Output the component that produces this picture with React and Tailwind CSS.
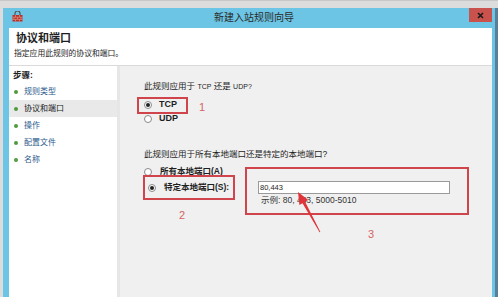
import React from 'react';

function Radio({ checked }) {
  return (
    <span className="w-[8px] h-[8px] rounded-full border border-[#8a8a8a] bg-white flex items-center justify-center shrink-0">
      {checked && <span className="w-[4px] h-[4px] rounded-full bg-[#222]"></span>}
    </span>
  );
}

function FirewallIcon() {
  return (
    <svg width="11" height="11" viewBox="0 0 11 11">
      <path d="M3 4 V2.5 A2.5 2.5 0 0 1 8 2.5 V4" fill="none" stroke="#555" strokeWidth="1.2" />
      <rect x="0.5" y="4" width="10" height="6.5" fill="#b8302a" />
      <path d="M0.5 6.2 H10.5 M0.5 8.4 H10.5 M3.5 4 V6.2 M7.5 4 V6.2 M5.5 6.2 V8.4 M2 6.2 V8.4 M9 6.2 V8.4 M3.5 8.4 V10.5 M7.5 8.4 V10.5" stroke="#e8a090" strokeWidth="0.6" />
    </svg>
  );
}

const steps = [
  { label: '规则类型', active: false },
  { label: '协议和端口', active: true },
  { label: '操作', active: false },
  { label: '配置文件', active: false },
  { label: '名称', active: false },
];

export default function App() {
  return (
    <div className="relative w-[498px] h-[297px] overflow-hidden bg-[#dcdcdc] flex flex-col font-['Liberation_Sans','Noto_Sans_CJK_SC',sans-serif] text-[#1e1e1e]">
      <div className="h-[8px] shrink-0 border-t border-[#c8c8c8]"></div>
      <div className="flex flex-1 min-h-0">
        <div className="w-[3px] shrink-0"></div>
        {/* window frame */}
        <div className="flex-1 bg-[#6cc5e4] pl-[6px] pr-[3px] flex flex-col">
          {/* title bar */}
          <div className="h-[20px] shrink-0 flex items-start">
            <div className="w-[20px] pt-[3px] pl-[3px] shrink-0">
              <FirewallIcon />
            </div>
            <div className="flex-1 h-[20px] flex items-center justify-center">
              <span className="text-[10px] leading-none text-[#2a2a2a] ml-[10px]">新建入站规则向导</span>
            </div>
            <div className="w-[23px] h-[14px] shrink-0 bg-[#c9524c] flex items-center justify-center">
              <svg width="7" height="7" viewBox="0 0 7 7">
                <path d="M1 1 L6 6 M6 1 L1 6" stroke="#1a1a1a" strokeWidth="1.6" />
              </svg>
            </div>
          </div>
          {/* client */}
          <div className="flex-1 bg-white flex flex-col min-h-0">
            <div className="h-[38px] shrink-0 border-b border-[#dadada] pl-[7px] pt-[3px]">
              <div className="text-[11px] leading-[14px] font-bold">协议和端口</div>
              <div className="text-[7.8px] leading-[10px] mt-[4px] -ml-[2px]">指定应用此规则的协议和端口。</div>
            </div>
            <div className="flex flex-1 min-h-0">
              {/* steps pane */}
              <div className="w-[111px] shrink-0 bg-white border-r-[3px] border-[#e6e6e6] pt-[4px]">
                <div className="pl-[4px] text-[8.5px] leading-[11px] font-bold">步骤:</div>
                <div className="mt-[2px]">
                  {steps.map((s) => (
                    <div
                      key={s.label}
                      className={`h-[17px] flex items-center pl-[5px] gap-[6px] ${s.active ? 'bg-[#e9e9e9]' : ''}`}
                    >
                      <span className="w-[4px] h-[4px] rounded-full bg-[#4f9a3c]"></span>
                      <span className={`text-[8px] leading-none ${s.active ? 'text-[#1a1a1a]' : 'text-[#2c5a8c]'}`}>{s.label}</span>
                    </div>
                  ))}
                </div>
              </div>
              {/* content pane */}
              <div className="flex-1 bg-[#f0f0f0] pl-[24px] pt-[15px] text-[8.5px]">
                <div className="h-[11px] leading-[11px]">此规则应用于 <span className="text-[7px]">TCP</span> 还是 <span className="text-[7px]">UDP?</span></div>
                <div className="mt-[7px] h-[11px] flex items-center gap-[7px]">
                  <Radio checked />
                  <span className="font-bold text-[9px] leading-none">TCP</span>
                </div>
                <div className="mt-[3px] h-[11px] flex items-center gap-[7px]">
                  <Radio />
                  <span className="font-bold text-[9px] leading-none">UDP</span>
                </div>
                <div className="mt-[25px] h-[11px] leading-[11px]">此规则应用于所有本地端口还是特定的本地端口?</div>
                <div className="mt-[6px] h-[11px] flex items-center gap-[8px]">
                  <Radio />
                  <span className="font-bold leading-none">所有本地端口(A)</span>
                </div>
                <div className="mt-[4px] flex items-start">
                  <div className="w-[114px] h-[13px] flex items-center gap-[8px] pl-[4px]">
                    <Radio checked />
                    <span className="font-bold leading-none">特定本地端口(S):</span>
                  </div>
                  <div className="flex flex-col">
                    <div className="w-[192px] h-[13px] bg-white border border-[#9a9a9a] flex items-center pl-[1px] text-[7.5px] leading-none">
                      80,443
                    </div>
                    <div className="pl-[3px] mt-[1px] text-[8.5px] leading-[10px] text-[#333]">
                      示例: 80, 443, 5000-5010
                    </div>
                  </div>
                </div>
              </div>
            </div>
          </div>
        </div>
        <div className="w-[3px] shrink-0 bg-[#5b7f97]"></div>
      </div>

      {/* annotations */}
      <div className="absolute left-[137px] top-[97px] w-[51px] h-[17px] border-2 border-[#d0454b]"></div>
      <div className="absolute left-[199px] top-[100px] text-[11px] leading-[14px] text-[#d46464]">1</div>
      <div className="absolute left-[143px] top-[175px] w-[92px] h-[25px] border-2 border-[#d0454b]"></div>
      <div className="absolute left-[179px] top-[208px] text-[11px] leading-[14px] text-[#d46464]">2</div>
      <div className="absolute left-[245px] top-[167px] w-[224px] h-[48px] border-2 border-[#d0454b]"></div>
      <div className="absolute left-[368px] top-[227px] text-[11px] leading-[14px] text-[#d46464]">3</div>
      <svg className="absolute left-0 top-0" width="498" height="297" viewBox="0 0 498 297">
        <polygon
          points="298,192 308.2,200.1 305.1,201.8 320.4,231.9 319.6,232.2 302.5,203.2 299.4,204.9"
          fill="#e0343a"
        />
      </svg>
    </div>
  );
}
